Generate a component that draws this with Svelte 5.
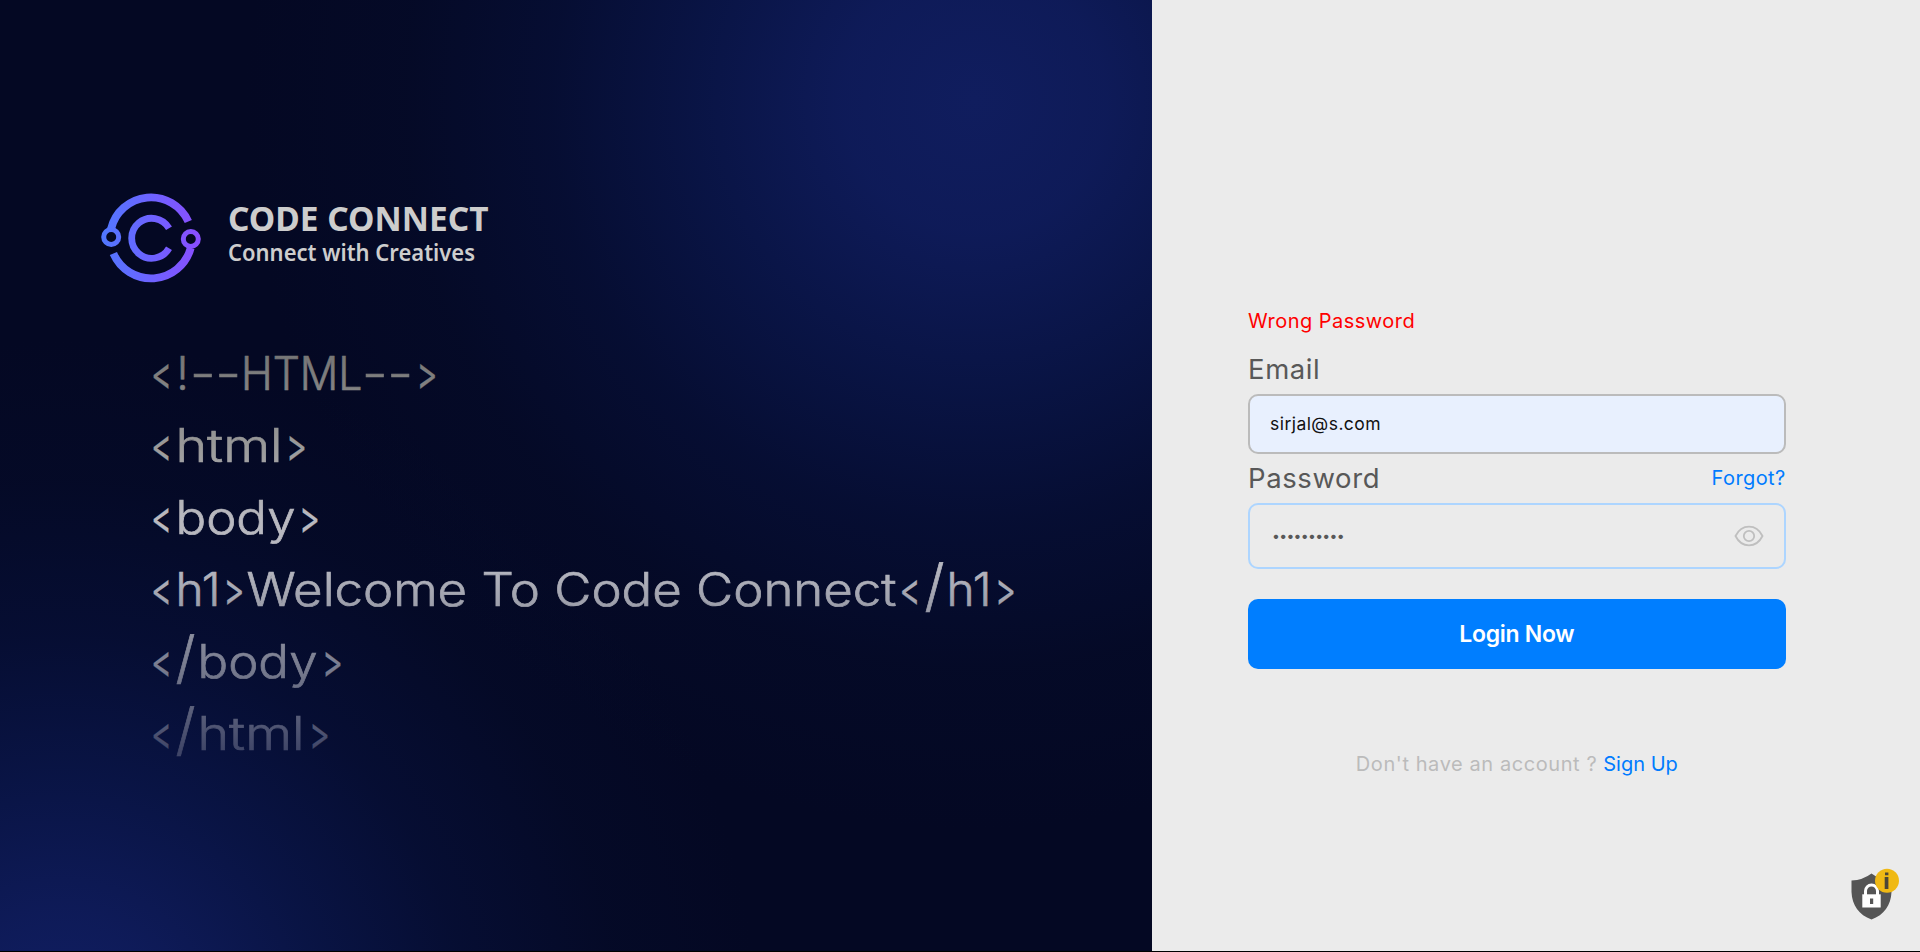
<script>
  // Each run of a code line: [text, x, width]
  const lines = [
    [['<', 0, 21], ['!', 25.5, 12], ['--', 39, 51], ['HTML', 90, 121.5], ['--', 211, 51], ['>', 265.5, 21]],
    [['<', 0, 21], ['html', 24.5, 107], ['>', 135, 21]],
    [['<', 0, 21], ['body', 24.5, 120], ['>', 148, 21]],
    [['<', 0, 21], ['h1', 24.5, 45], ['>', 72.5, 21], ['Welcome To Code Connect', 95.5, 650], ['<', 748.5, 21], ['/', 773.5, 20], ['h1', 795.5, 45], ['>', 844, 21]],
    [['<', 0, 21], ['/', 24.5, 20], ['body', 46.5, 120], ['>', 171, 21]],
    [['<', 0, 21], ['/', 24.5, 20], ['html', 46.5, 107], ['>', 158, 21]]
  ];
  const kind = (text) => (text === '/' ? 'slash' : text === '<' || text === '>' ? 'angle' : 'word');
  const password = '••••••••••';
</script>

<div class="page">
  <section class="intro">
    <svg class="logo" width="400" height="96" viewBox="98 190 400 96">
      <defs>
        <linearGradient id="brand" gradientUnits="userSpaceOnUse" x1="101" y1="0" x2="201" y2="0">
          <stop offset="0" stop-color="#5078ff" />
          <stop offset="1" stop-color="#8b4dff" />
        </linearGradient>
      </defs>
      <g fill="none" stroke="url(#brand)">
        <path stroke-width="7.8" d="M111 229A41 41 0 0 1 188.300 221.500M113.400 253.500A41 41 0 0 0 190.700 248" />
        <path stroke-width="6.800" d="M169 228.300A20 20 0 1 0 169 248.300" />
        <circle cx="111.200" cy="237" r="7.500" stroke-width="5" />
        <circle cx="190.800" cy="239" r="7.500" stroke-width="5" />
      </g>
      <g class="brand-text">
        <text x="228" y="231" font-size="34.300" font-weight="700" textLength="260.500" lengthAdjust="spacingAndGlyphs">CODE CONNECT</text>
        <text x="228" y="260.700" font-size="23.500" font-weight="600" textLength="247" lengthAdjust="spacingAndGlyphs">Connect with Creatives</text>
      </g>
    </svg>

    <svg class="code" width="880" height="432" viewBox="0 0 880 432">
      <defs>
        <linearGradient id="fade" gradientUnits="userSpaceOnUse" x1="0" y1="0" x2="0" y2="432">
          <stop offset="0" stop-color="#707070" />
          <stop offset="0.08" stop-color="#7c7c7c" />
          <stop offset="0.25" stop-color="#999999" />
          <stop offset="0.42" stop-color="#b9b9c0" />
          <stop offset="0.53" stop-color="#b6b7c0" />
          <stop offset="0.62" stop-color="#9d9fab" />
          <stop offset="0.78" stop-color="#74788c" />
          <stop offset="0.96" stop-color="#3f4567" />
        </linearGradient>
      </defs>
      {#each lines as runs, i}
        {#each runs as [text, x, width]}
          <text class={kind(text)} {x} y={52.8 + i * 72} textLength={width} lengthAdjust="spacingAndGlyphs" fill="url(#fade)">{text}</text>
        {/each}
      {/each}
    </svg>
  </section>

  <section class="panel">
    <form class="form" onsubmit={(e) => e.preventDefault()}>
      <p class="error">Wrong Password</p>
      <div class="label-row"><span class="label">Email</span></div>
      <div class="field email"><span>sirjal@s.com</span></div>
      <div class="label-row">
        <span class="label">Password</span>
        <a class="forgot" href="#forgot">Forgot?</a>
      </div>
      <div class="field password">
        <span class="dots">{password}</span>
        <svg width="30" height="22" viewBox="0 0 30 22" fill="none" stroke="#bfbfbf" stroke-width="1.800">
          <path d="M1.500 11C4.500 5 9.500 1.700 15 1.700S25.500 5 28.500 11C25.500 17 20.500 20.300 15 20.300S4.500 17 1.500 11Z" />
          <circle cx="15" cy="11" r="5.200" />
        </svg>
      </div>
      <button type="submit">Login Now</button>
      <p class="signup"><span>Don't have an account ?</span><a href="#signup">Sign Up</a></p>
    </form>
  </section>

  <svg class="shield" width="44" height="54" viewBox="0 0 44 54">
    <path fill="#555" d="M1.500 12.500Q13 12 21.500 5.500Q30 12 41.500 12.500V24C41 37 34 47 21.500 51.500C9 47 2 37 1.500 24Z" />
    <path fill="none" stroke="#fff" stroke-width="3" d="M15.500 27V23a6 6 0 0 1 12 0V27" />
    <rect x="12.300" y="26.300" width="18.400" height="13.200" fill="#fff" />
    <path fill="#555" d="M20 30.500h3.200v5.500H20z" />
    <circle cx="37" cy="12.800" r="12" fill="#f0b914" />
    <path fill="#4b4638" d="M35 4.500h3.400v2.700H35zM34.700 9h3.700v12h-3.700z" />
  </svg>
</div>

<style>
  :global(body) { background: #000; }
  .page {
    position: relative;
    display: grid;
    grid-template-columns: 60% 40%;
    height: 951px;
    overflow: hidden;
    font-family: Inter, sans-serif;
    font-feature-settings: 'calt' 0;
    white-space: nowrap;
  }
  .intro {
    background:
      radial-gradient(circle 730px at 975px 100px, #101d5e 0%, rgba(15, 28, 92, 0.93) 18%, rgba(11, 24, 80, 0.76) 38%, rgba(8, 19, 66, 0.5) 58%, rgba(6, 15, 50, 0.25) 78%, rgba(5, 9, 36, 0) 100%),
      radial-gradient(circle 700px at 60px 1040px, #111f65 0%, rgba(15, 28, 92, 0.93) 18%, rgba(11, 24, 80, 0.74) 38%, rgba(8, 19, 66, 0.5) 58%, rgba(6, 15, 50, 0.24) 80%, rgba(5, 9, 36, 0) 100%),
      #040823;
    padding: 190px 0 0 98px;
  }
  .logo, .code { display: block; }
  .brand-text { fill: #cdcdcd; font-family: 'Noto Sans', sans-serif; }
  .code { margin: 51px 0 0 53px; }
  .code text { stroke: url(#fade); stroke-width: 0.7px; }
  .word { font-size: 46px; font-weight: 300; }
  .code .angle { font-size: 47px; font-weight: 400; stroke-width: 0.2px; }
  .slash { font-size: 57px; font-weight: 300; }
  .panel { background: #ebebeb; padding: 306px 134.400px 0 96px; }
  .form { display: flex; flex-direction: column; }
  p { margin: 0; font-size: 20px; line-height: 30px; }
  a { color: #007bff; text-decoration: none; font-size: 20px; }
  .error { color: #f00; letter-spacing: 0.480px; }
  .label-row { display: flex; justify-content: space-between; align-items: center; height: 42px; margin-bottom: 4px; }
  .error + .label-row { margin-top: 12px; }
  .field + .label-row { margin-top: 3px; }
  .label { color: #585858; font-size: 27.500px; line-height: 44px; letter-spacing: 0.600px; }
  .forgot { letter-spacing: 0.400px; }
  .field { box-sizing: border-box; display: flex; align-items: center; border-radius: 10px; }
  .email { height: 60px; padding: 0 20px 2px; border: 2px solid #bbb; background: #e8f0fe; color: #111; font-size: 17.500px; letter-spacing: 0.450px; }
  .password { height: 66px; padding: 0 20px 0 22px; border: 2px solid #add5ff; justify-content: space-between; color: #585858; }
  .dots { font-size: 14px; line-height: 20px; letter-spacing: -0.680px; padding-bottom: 1px; }
  button { height: 70px; margin-top: 30px; padding: 0; border: 0; border-radius: 10px; background: #007eff; color: #fff; font: 600 23px Inter, sans-serif; letter-spacing: -0.300px; }
  .signup { display: flex; justify-content: center; gap: 6px; margin-top: 80px; color: #bbb; }
  .signup span { letter-spacing: 0.580px; }
  .shield { position: absolute; left: 1850px; top: 868px; overflow: visible; }
</style>
